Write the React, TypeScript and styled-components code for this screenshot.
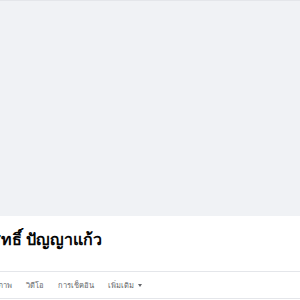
import React from "react";
import styled, { createGlobalStyle } from "styled-components";

const Global = createGlobalStyle`
  html, body { margin: 0; padding: 0; background: #ffffff; overflow: hidden; }
  body { font-family: "Noto Sans", "Liberation Sans", sans-serif; }
`;

const Page = styled.div`
  width: 300px;
  height: 300px;
  overflow: hidden;
  display: flex;
  flex-direction: column;
  background: #ffffff;
`;

const Cover = styled.div`
  height: 216px;
  flex: none;
  background: #f0f2f5;
  border-top: 1px solid #e4e6ea;
  box-sizing: border-box;
`;

const Header = styled.div`
  display: flex;
  flex-direction: column;
`;

const Name = styled.h1`
  margin: 11px 0 0 -9px;
  font-size: 16px;
  line-height: 24px;
  font-weight: 700;
  color: #050505;
  white-space: nowrap;
`;

const Sub = styled.div`
  margin: -3px 0 0 -20px;
  font-size: 7px;
  line-height: 10px;
  color: #385898;
  white-space: nowrap;
  height: 23px;
`;

const Tabs = styled.nav`
  margin-left: -11px;
  border-top: 1px solid #e4e6ea;
  border-bottom: 1px solid #e4e6ea;
  height: 26px;
  display: flex;
  align-items: center;
  gap: 14px;
`;

const Tab = styled.span`
  font-size: 7.5px;
  color: #65676b;
  white-space: nowrap;
  display: inline-flex;
  align-items: center;
  gap: 4px;
`;

const Caret = styled.span`
  width: 0;
  height: 0;
  border-left: 2.5px solid transparent;
  border-right: 2.5px solid transparent;
  border-top: 3px solid #65676b;
`;

export default function App() {
  return (
    <Page>
      <Global />
      <Cover />
      <Header>
        <Name>สิทธิ์ ปัญญาแก้ว</Name>
        <Sub>เพื่อน</Sub>
        <Tabs>
          <Tab>รูปภาพ</Tab>
          <Tab>วิดีโอ</Tab>
          <Tab>การเช็คอิน</Tab>
          <Tab>
            เพิ่มเติม <Caret />
          </Tab>
        </Tabs>
      </Header>
    </Page>
  );
}
